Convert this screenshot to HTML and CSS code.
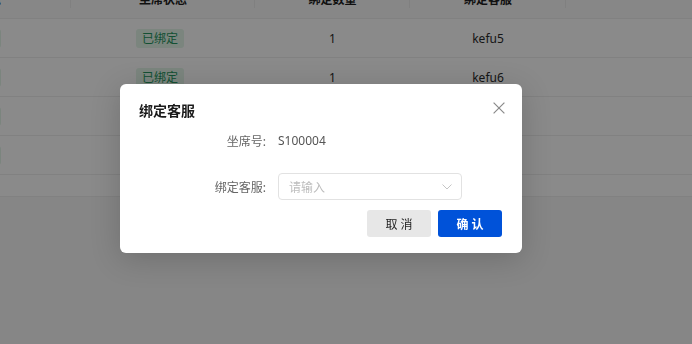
FILE: index.html
```html
<!DOCTYPE html>
<html>
<head>
    <meta charset="utf-8">
    <title>绑定客服</title>
    <link rel="stylesheet" href="styles.css">
</head>
<body>
    <div class="table-wrap">
        <table class="seat-table">
            <colgroup>
                <col class="col-a">
                <col class="col-b">
                <col class="col-c">
                <col class="col-d">
                <col class="col-e">
            </colgroup>
            <thead>
                <tr>
                    <th>在线状态</th>
                    <th>坐席状态</th>
                    <th>绑定数量</th>
                    <th>绑定客服</th>
                    <th></th>
                </tr>
            </thead>
            <tbody>
                <tr>
                    <td><span class="tag">已启用</span></td>
                    <td class="cell-status"><span class="tag">已绑定</span></td>
                    <td>1</td>
                    <td>kefu5</td>
                    <td></td>
                </tr>
                <tr>
                    <td><span class="tag">已启用</span></td>
                    <td class="cell-status"><span class="tag">已绑定</span></td>
                    <td>1</td>
                    <td>kefu6</td>
                    <td></td>
                </tr>
                <tr>
                    <td><span class="tag">已启用</span></td>
                    <td class="cell-status"><span class="tag">已绑定</span></td>
                    <td>1</td>
                    <td>kefu7</td>
                    <td></td>
                </tr>
                <tr>
                    <td><span class="tag">已启用</span></td>
                    <td class="cell-status"><span class="tag">未绑定</span></td>
                    <td>0</td>
                    <td></td>
                    <td></td>
                </tr>
            </tbody>
        </table>
        <div class="table-foot"></div>
    </div>

    <!-- 弹窗遮罩 -->
    <div class="mask"></div>

    <div class="dialog">
        <div class="dialog-header">
            <span class="dialog-title">绑定客服</span>
            <span class="dialog-close">
                <svg width="12" height="12" viewBox="0 0 12 12">
                    <path d="M0.6 0.6 L11.4 11.4 M11.4 0.6 L0.6 11.4" stroke="#8a8a8a" stroke-width="1.2" fill="none"/>
                </svg>
            </span>
        </div>
        <div class="dialog-body">
            <div class="form-item first">
                <label class="form-label">坐席号:</label>
                <div class="form-value">S100004</div>
            </div>
            <div class="form-item">
                <label class="form-label">绑定客服:</label>
                <div class="select">
                    <span class="placeholder">请输入</span>
                    <svg class="arrow" width="10" height="6" viewBox="0 0 10 6">
                        <path d="M0.5 0.5 L5 5 L9.5 0.5" stroke="#c5c5c5" stroke-width="1" fill="none"/>
                    </svg>
                </div>
            </div>
        </div>
        <div class="dialog-footer">
            <button class="btn">取 消</button>
            <button class="btn btn-primary">确 认</button>
        </div>
    </div>
</body>
</html>
```
FILE: styles.css
```css
body {
    margin: 0;
    height: 344px;
    overflow: hidden;
    background: #f7f7f7;
    font-family: "Noto Sans", "Noto Sans CJK SC", sans-serif;
    font-size: 12px;
}

.table-wrap {
    margin-left: -117px;
    margin-top: -21px;
    width: 900px;
    background: #fff;
}

.seat-table {
    border-collapse: collapse;
    table-layout: fixed;
    width: 883px;
}

.col-a { width: 188px; }
.col-b { width: 184px; }
.col-c { width: 155px; }
.col-d { width: 156px; }
.col-e { width: 200px; }

.seat-table th {
    position: relative;
    height: 39px;
    padding: 0;
    background: #fafafa;
    color: #1f1f1f;
    font-weight: 600;
    text-align: center;
    border-bottom: 1px solid #efefef;
}

/* separador de la cabecera */
.seat-table th::after {
    content: "";
    position: absolute;
    right: 0;
    top: 10px;
    width: 1px;
    height: 19px;
    background: #ececec;
}

.seat-table td {
    height: 38px;
    padding: 0;
    text-align: center;
    color: #2a2a2a;
    border-bottom: 1px solid #efefef;
}

.seat-table td.cell-status {
    padding-right: 6px;
}

.tag {
    display: inline-block;
    padding: 0 6px;
    height: 19px;
    line-height: 19px;
    border-radius: 3px;
    background: #e3f6e9;
    color: #25945f;
}

.table-foot {
    height: 21px;
    border-bottom: 1px solid #efefef;
}

.mask {
    position: fixed;
    inset: 0;
    background: rgba(0, 0, 0, 0.46);
}

.dialog {
    position: absolute;
    top: 84px;
    left: 120px;
    width: 402px;
    box-sizing: border-box;
    background: #fff;
    border-radius: 6px;
    box-shadow: 0 6px 30px rgba(0, 0, 0, 0.18);
    padding-bottom: 16px;
}

.dialog-header {
    display: flex;
    justify-content: space-between;
    align-items: flex-start;
    padding: 16px 17px 0 19px;
}

.dialog-title {
    line-height: 22px;
    font-size: 14px;
    font-weight: 600;
    color: #1a1a1a;
}

.dialog-close {
    display: flex;
    margin-top: 2px;
}

.dialog-body {
    padding: 0 20px;
}

.form-item {
    display: grid;
    grid-template-columns: 126px 184px;
    column-gap: 12px;
    align-items: center;
    height: 27px;
    margin-top: 19px;
}

.form-item.first {
    margin-top: 5px;
}

.form-label {
    text-align: right;
    color: #666;
}

.form-value {
    color: #555;
}

.select {
    display: flex;
    align-items: center;
    justify-content: space-between;
    height: 27px;
    box-sizing: border-box;
    border: 1px solid #e2e2e2;
    border-radius: 4px;
    padding: 0 9px 0 10px;
}

.placeholder {
    color: #bdbdbd;
}

.dialog-footer {
    display: flex;
    justify-content: flex-end;
    gap: 7px;
    padding: 0 20px;
    margin-top: 10px;
}

.btn {
    width: 64px;
    height: 27px;
    border: none;
    border-radius: 3px;
    background: #e7e7e7;
    color: #1f1f1f;
    font-family: inherit;
    font-size: 12px;
    padding: 0;
}

.btn-primary {
    background: #0052d9;
    color: #fff;
    font-weight: 600;
}
```
